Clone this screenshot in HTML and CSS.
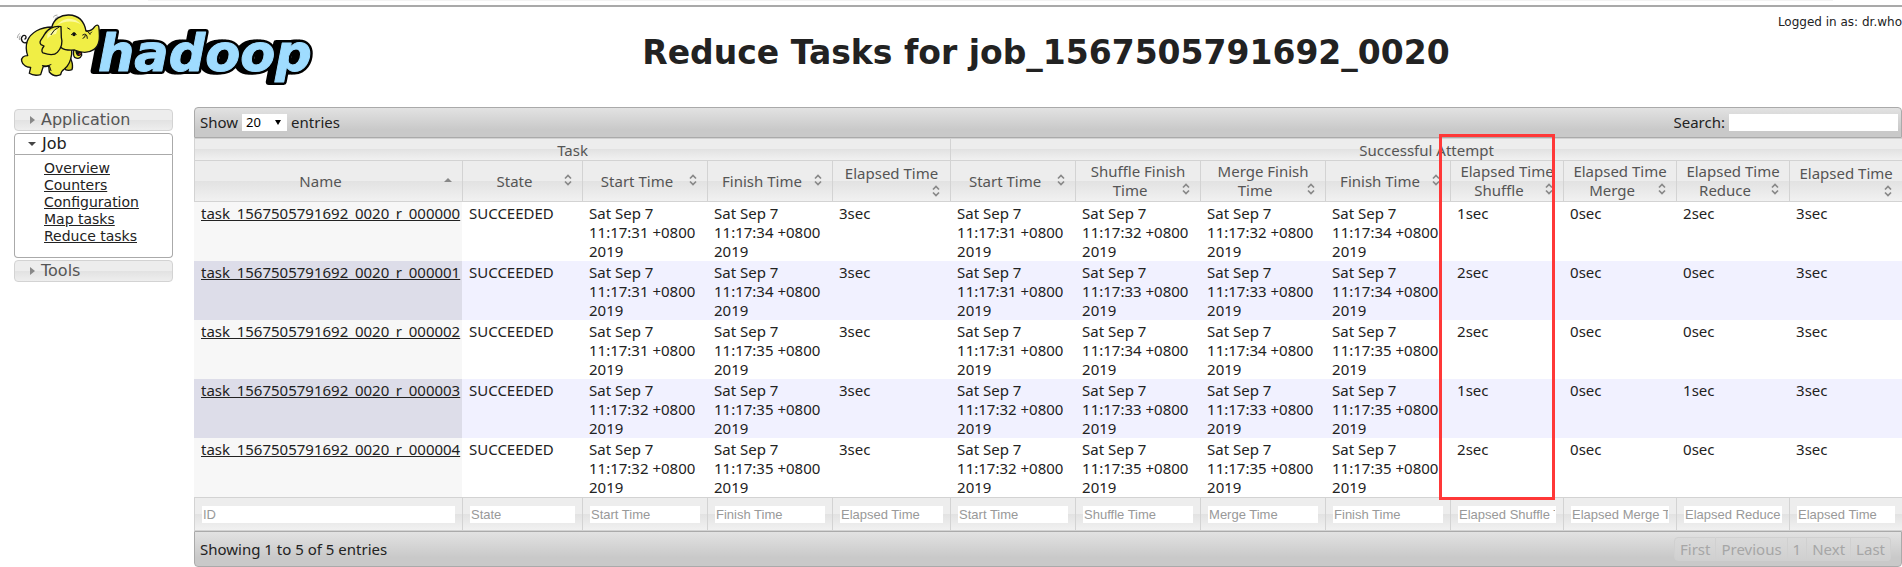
FILE: index.html
```html
<!DOCTYPE html>
<html lang="en">
<head>
<meta charset="utf-8">
<title>Reduce Tasks for job_1567505791692_0020</title>
<link rel="stylesheet" href="styles.css">
</head>
<body>
<svg class="defs" aria-hidden="true">
  <symbol id="sort" viewBox="0 0 16 16"><path d="M5 6.500 8 3.500l3 3M5 9.500l3 3 3-3" fill="none" stroke="#888" stroke-width="1.700"/></symbol>
  <symbol id="asc" viewBox="0 0 16 16"><path d="M4 10 8 6l4 4z" fill="#888"/></symbol>
</svg>
<div class="edge"></div>
<header class="header">
  <a class="logo" href="#" aria-label="Hadoop">
    <svg viewBox="14 10 300 76" width="300" height="76">
      <g class="word">
        <text id="word" x="98" y="71">hadoop</text>
        <use href="#word" class="depth" x="-6"/>
        <use href="#word" class="depth" x="-3"/>
        <use href="#word" class="depth"/>
        <use href="#word" class="face"/>
      </g>
      <g transform="translate(10 5) scale(.3333)" stroke="#111" stroke-width="4" stroke-linejoin="round" stroke-linecap="round" fill="#f0ee45">
        <path d="M50 112C38 118 30 102 37 94s16 2 8 8" fill="none"/>
        <path d="M22 98q1-7 6-12M28 104q-2-6 2-11M130 36q4-6 11-6M135 41q4-5 9-6" fill="none" stroke="#777" stroke-width="2"/>
        <path d="M160 170l6 24q10 4 20 0 4-12-2-28l-8-18z" fill="#d4cf20"/>
        <path d="M126 66C92 66 62 82 52 108c-6 17-3 32 1 44-11-1-20 7-18 16 3 14 17 19 27 19l-4 18q13 9 34 4l8-25q9 2 16-2l2 19q14 17 34 8 1-10 11-17 18-14 22-44V80z"/>
        <path d="M118 182l5 15M97 182q14 4 26-3" fill="none" stroke-width="3"/>
        <path d="M192 132q-4 18 2 25 15 8 21-6l-1-14z"/>
        <path d="M198 134q0 14 7 17 9 0 9-14z" fill="#111"/>
        <path d="M205 149q7 1 8-4-6-2-8 4z" fill="#e33" stroke="none"/>
        <path d="M126 65C131 42 153 29 177 30c31 1 46 21 51 48 12 1 20-3 26-13 8-9 13-4 13 5 3 30 2 52-16 64-16 11-39 9-57 1-17 1-31 1-39-6-12-10-15-35-29-64z"/>
        <path d="M140 62C160 34 195 35 214 59 194 47 164 45 140 62z" fill="#fbf9a0" stroke="none"/>
        <path d="M153 65C132 61 111 72 103 89c-8 15-18 20-10 30l9 4c-6 8-8 17-3 21 17 6 34 8 43-2 15-16 16-31 12-45z"/>
        <path d="M112 87q12-16 31-14l-5 14q-17 2-26 15z" fill="#fbf9a0" stroke="none"/>
        <path d="M147 66q-16 7-24 23M173 69l7 4M184 89q8-10 15-1M218 90q13-9 14 10M228 77q8 2 12 11M219 100q7-2 7-9M240 86l5-5" fill="none" stroke-width="3"/>
        <ellipse cx="192" cy="88" rx="5" ry="6" fill="#111" stroke="none"/>
      </g>
    </svg>
  </a>
  <h1 class="title">Reduce Tasks for job_1567505791692_0020</h1>
  <div class="user">Logged in as: dr.who</div>
</header>
<div class="layout">
  <nav class="nav">
    <h3 class="nav-head"><button type="button">Application</button></h3>
    <h3 class="nav-head open"><button type="button">Job</button></h3>
    <ul class="nav-body">
      <li><a href="#">Overview</a></li>
      <li><a href="#">Counters</a></li>
      <li><a href="#">Configuration</a></li>
      <li><a href="#">Map tasks</a></li>
      <li><a href="#">Reduce tasks</a></li>
    </ul>
    <h3 class="nav-head"><button type="button">Tools</button></h3>
  </nav>
  <main class="data">
    <div class="bar bar-top">
      <label class="length">Show <span class="select"><select><option>20</option><option>40</option><option>60</option></select></span> entries</label>
      <label class="search">Search: <input type="text"></label>
    </div>
    <table>
      <colgroup>
        <col class="c-name"><col class="c-state"><col class="c-time"><col class="c-time"><col class="c-total">
        <col class="c-time"><col class="c-time"><col class="c-time"><col class="c-time">
        <col class="c-span"><col class="c-span"><col class="c-span"><col class="c-span">
      </colgroup>
      <thead>
        <tr class="groups"><th colspan="5">Task</th><th colspan="8">Successful Attempt</th></tr>
        <tr class="heads">
          <th><div>Name<svg><use href="#asc"/></svg></div></th>
          <th><div>State<svg><use href="#sort"/></svg></div></th>
          <th><div>Start Time<svg><use href="#sort"/></svg></div></th>
          <th><div>Finish Time<svg><use href="#sort"/></svg></div></th>
          <th><div>Elapsed Time<svg><use href="#sort"/></svg></div></th>
          <th><div>Start Time<svg><use href="#sort"/></svg></div></th>
          <th><div>Shuffle Finish Time<svg><use href="#sort"/></svg></div></th>
          <th><div>Merge Finish Time<svg><use href="#sort"/></svg></div></th>
          <th><div>Finish Time<svg><use href="#sort"/></svg></div></th>
          <th><div>Elapsed Time Shuffle<svg><use href="#sort"/></svg></div></th>
          <th><div>Elapsed Time Merge<svg><use href="#sort"/></svg></div></th>
          <th><div>Elapsed Time Reduce<svg><use href="#sort"/></svg></div></th>
          <th><div>Elapsed Time<svg><use href="#sort"/></svg></div></th>
        </tr>
      </thead>
      <tbody>
        <tr><td><a href="#">task_1567505791692_0020_r_000000</a></td><td>SUCCEEDED</td><td>Sat Sep 7 11:17:31 +0800 2019</td><td>Sat Sep 7 11:17:34 +0800 2019</td><td>3sec</td><td>Sat Sep 7 11:17:31 +0800 2019</td><td>Sat Sep 7 11:17:32 +0800 2019</td><td>Sat Sep 7 11:17:32 +0800 2019</td><td>Sat Sep 7 11:17:34 +0800 2019</td><td>1sec</td><td>0sec</td><td>2sec</td><td>3sec</td></tr>
        <tr><td><a href="#">task_1567505791692_0020_r_000001</a></td><td>SUCCEEDED</td><td>Sat Sep 7 11:17:31 +0800 2019</td><td>Sat Sep 7 11:17:34 +0800 2019</td><td>3sec</td><td>Sat Sep 7 11:17:31 +0800 2019</td><td>Sat Sep 7 11:17:33 +0800 2019</td><td>Sat Sep 7 11:17:33 +0800 2019</td><td>Sat Sep 7 11:17:34 +0800 2019</td><td>2sec</td><td>0sec</td><td>0sec</td><td>3sec</td></tr>
        <tr><td><a href="#">task_1567505791692_0020_r_000002</a></td><td>SUCCEEDED</td><td>Sat Sep 7 11:17:31 +0800 2019</td><td>Sat Sep 7 11:17:35 +0800 2019</td><td>3sec</td><td>Sat Sep 7 11:17:31 +0800 2019</td><td>Sat Sep 7 11:17:34 +0800 2019</td><td>Sat Sep 7 11:17:34 +0800 2019</td><td>Sat Sep 7 11:17:35 +0800 2019</td><td>2sec</td><td>0sec</td><td>0sec</td><td>3sec</td></tr>
        <tr><td><a href="#">task_1567505791692_0020_r_000003</a></td><td>SUCCEEDED</td><td>Sat Sep 7 11:17:32 +0800 2019</td><td>Sat Sep 7 11:17:35 +0800 2019</td><td>3sec</td><td>Sat Sep 7 11:17:32 +0800 2019</td><td>Sat Sep 7 11:17:33 +0800 2019</td><td>Sat Sep 7 11:17:33 +0800 2019</td><td>Sat Sep 7 11:17:35 +0800 2019</td><td>1sec</td><td>0sec</td><td>1sec</td><td>3sec</td></tr>
        <tr><td><a href="#">task_1567505791692_0020_r_000004</a></td><td>SUCCEEDED</td><td>Sat Sep 7 11:17:32 +0800 2019</td><td>Sat Sep 7 11:17:35 +0800 2019</td><td>3sec</td><td>Sat Sep 7 11:17:32 +0800 2019</td><td>Sat Sep 7 11:17:35 +0800 2019</td><td>Sat Sep 7 11:17:35 +0800 2019</td><td>Sat Sep 7 11:17:35 +0800 2019</td><td>2sec</td><td>0sec</td><td>0sec</td><td>3sec</td></tr>
      </tbody>
      <tfoot>
        <tr>
          <th><input type="text" aria-label="ID" placeholder="ID"></th>
          <th><input type="text" aria-label="State" placeholder="State"></th>
          <th><input type="text" aria-label="Start Time" placeholder="Start Time"></th>
          <th><input type="text" aria-label="Finish Time" placeholder="Finish Time"></th>
          <th><input type="text" aria-label="Elapsed Time" placeholder="Elapsed Time"></th>
          <th><input type="text" aria-label="Attempt Start Time" placeholder="Start Time"></th>
          <th><input type="text" aria-label="Shuffle Time" placeholder="Shuffle Time"></th>
          <th><input type="text" aria-label="Merge Time" placeholder="Merge Time"></th>
          <th><input type="text" aria-label="Attempt Finish Time" placeholder="Finish Time"></th>
          <th><input type="text" aria-label="Elapsed Shuffle Time" placeholder="Elapsed Shuffle Time"></th>
          <th><input type="text" aria-label="Elapsed Merge Time" placeholder="Elapsed Merge Time"></th>
          <th><input type="text" aria-label="Elapsed Reduce Time" placeholder="Elapsed Reduce Time"></th>
          <th><input type="text" aria-label="Attempt Elapsed Time" placeholder="Elapsed Time"></th>
        </tr>
      </tfoot>
    </table>
    <div class="bar bar-bottom">
      <div>Showing 1 to 5 of 5 entries</div>
      <div class="pager">
        <button type="button" disabled>First</button><button type="button" disabled>Previous</button><button type="button" disabled>1</button><button type="button" disabled>Next</button><button type="button" disabled>Last</button>
      </div>
    </div>
    <div class="highlight"></div>
  </main>
</div>
</body>
</html>
```
FILE: styles.css
```css
* { box-sizing: border-box; }
body { margin: 0; background: #fff; color: #222; font: 15px/19px "Noto Sans", sans-serif; }
a { color: #222; }
.defs { position: absolute; width: 0; height: 0; }

.edge { height: 7px; border-bottom: 2px solid #a9a9a9; background: linear-gradient(#f3f3f3, #f3f3f3) 148px 0 / 1685px 1px no-repeat; }
.header { display: grid; grid-template-columns: 190px 1fr; height: 100px; position: relative; font-family: "DejaVu Sans", sans-serif; }
.logo { padding: 3px 0 0 14px; }
.logo svg { display: block; overflow: visible; }
.word { font: italic bold 51px "DejaVu Sans", sans-serif; stroke-linejoin: round; }
.depth { fill: #000; stroke: #000; stroke-width: 6px; }
.face { fill: #9fdcff; stroke: #9fdcff; stroke-width: 1px; }
.title { margin: 0; padding-top: 26px; font-size: 33px; line-height: 40px; text-align: center; white-space: nowrap; }
.user { position: absolute; top: 7px; right: 0; font-size: 12px; line-height: 16px; }

.layout { display: grid; grid-template-columns: 159px minmax(0, 1fr); gap: 21px; padding-left: 14px; }

.nav { padding-top: 2px; font-family: "DejaVu Sans", sans-serif; font-size: 14px; }
.nav-head { margin: 0 0 2px; font-weight: normal; }
.nav-head button { display: flex; align-items: center; gap: 7px; width: 100%; height: 22px; padding: 0 0 0 15px; border: 1px solid #d3d3d3; border-radius: 4px; background: linear-gradient(#ededed 50%, #e2e2e2 50%, #eee); color: #555; font: 16px/20px "DejaVu Sans", sans-serif; }
.nav-head button::before { content: ""; border: 4px solid transparent; border-left: 5px solid #888; border-right: 0; margin-right: -1px; }
.nav-head.open { margin: 0; }
.open button { border-color: #aaa; border-radius: 4px 4px 0 0; background: #fff; color: #212121; gap: 6px; padding-left: 13px; }
.open button::before { border: 4px solid transparent; border-top: 4px solid #454545; border-bottom: 0; margin: 0; }
.nav-body { list-style: none; margin: 0 0 2px; padding: 5px 0 12px 29px; border: 1px solid #aaa; border-top: 0; border-radius: 0 0 4px 4px; line-height: 17px; }

.data { position: relative; }
.bar { display: flex; justify-content: space-between; align-items: center; border: 1px solid #aaa; background: linear-gradient(#e2e2e2, #c9c9c9 75%); padding: 0 3px 0 5px; }
.bar-top { height: 31px; border-radius: 4px 4px 0 0; }
.bar-bottom { height: 36px; border-radius: 0 0 4px 4px; padding-right: 10px; }
.length, .search { display: flex; align-items: center; gap: 4px; }
.select { position: relative; display: flex; }
.select::after { content: ""; position: absolute; right: 6px; top: 6px; border: 3px solid transparent; border-top: 5px solid #000; border-bottom: 0; pointer-events: none; }
select { appearance: none; width: 45px; height: 17px; padding: 0 4px; border: 0; border-radius: 0; background: #fff; color: #000; font: 13px/17px "Noto Sans", sans-serif; }
input { display: block; height: 17px; padding: 0 1px; border: 0; background: #fff; font: 13px/17px "Liberation Sans", sans-serif; }
input::placeholder { color: #999; opacity: 1; }
.search input { width: 169px; }

table { width: 100%; table-layout: fixed; border-collapse: separate; border-spacing: 0; }
.c-name { width: 268px; }
.c-state { width: 120px; }
.c-time { width: 125px; }
.c-total { width: 118px; }
.c-span { width: 113px; }
th { border: 0 solid #d3d3d3; border-width: 1px 0 0 1px; background: linear-gradient(#ededed 50%, #e2e2e2 50%, #f1f1f1); color: #555; font-weight: normal; }
.groups th { height: 22px; padding: 2px 0 0; }
.heads th { height: 42px; padding: 0 6px; border-bottom-width: 1px; }
.heads div::after { content: ""; display: block; clear: both; }
.heads svg { float: right; width: 16px; height: 16px; }
td { height: 59px; padding: 2px 6px 0 7px; vertical-align: top; }
tbody tr:nth-child(even) { background: #f1f1ff; }
tbody td:first-child { background: #f7f7f7; }
tbody tr:nth-child(even) td:first-child { background: #dddde9; }
tfoot th { height: 34px; padding: 0 7px; border-bottom-width: 1px; }
tfoot input { width: 100%; }

.pager { display: flex; }
.pager button { height: 24px; padding: 0 5px; border: 1px solid #d0d0d0; border-left-width: 0; background: linear-gradient(#dadada, #d0d0d0); color: #a6a6a6; font: 15px/22px "Noto Sans", sans-serif; }
.pager button:first-child { border-left-width: 1px; border-radius: 4px 0 0 4px; }
.pager button:last-child { border-radius: 0 4px 4px 0; }

.highlight { position: absolute; top: 27px; bottom: 67px; left: 72.9%; width: 6.8%; border: 3px solid #ff3838; pointer-events: none; }
```
